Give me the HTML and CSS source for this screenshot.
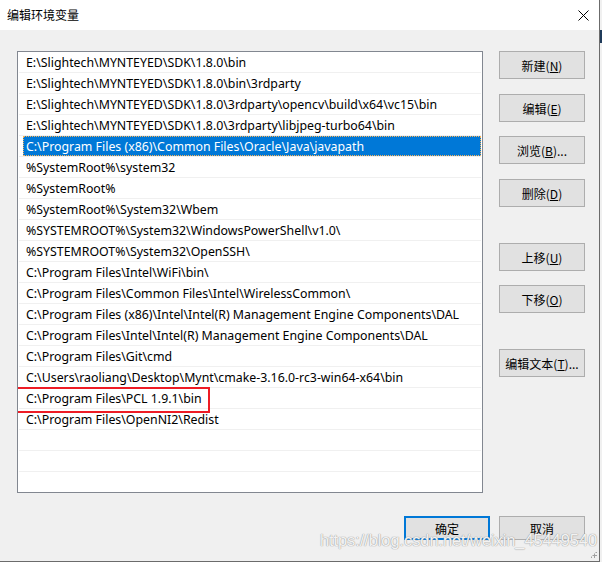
FILE: index.html
```html
<!DOCTYPE html>
<html lang="zh-CN">
<head>
    <meta charset="UTF-8">
    <meta name="viewport" content="width=device-width, initial-scale=1.0">
    <title>编辑环境变量</title>
    <link rel="stylesheet" href="styles.css">
</head>
<body>
    <div class="window">
        <div class="titlebar">
            <span class="title">编辑环境变量</span>
            <span class="close">
                <svg width="11" height="11" viewBox="0 0 11 11"><path d="M0.5 0.5 L10.5 10.5 M10.5 0.5 L0.5 10.5" stroke="#000" stroke-width="1" fill="none"/></svg>
            </span>
        </div>
        <div class="content">
            <div class="main">
                <div class="path-list">
                    <div class="row">E:\Slightech\MYNTEYED\SDK\1.8.0\bin</div>
                    <div class="row">E:\Slightech\MYNTEYED\SDK\1.8.0\bin\3rdparty</div>
                    <div class="row">E:\Slightech\MYNTEYED\SDK\1.8.0\3rdparty\opencv\build\x64\vc15\bin</div>
                    <div class="row">E:\Slightech\MYNTEYED\SDK\1.8.0\3rdparty\libjpeg-turbo64\bin</div>
                    <div class="row selected"><span class="sel">C:\Program Files (x86)\Common Files\Oracle\Java\javapath</span></div>
                    <div class="row">%SystemRoot%\system32</div>
                    <div class="row">%SystemRoot%</div>
                    <div class="row">%SystemRoot%\System32\Wbem</div>
                    <div class="row">%SYSTEMROOT%\System32\WindowsPowerShell\v1.0\</div>
                    <div class="row">%SYSTEMROOT%\System32\OpenSSH\</div>
                    <div class="row">C:\Program Files\Intel\WiFi\bin\</div>
                    <div class="row">C:\Program Files\Common Files\Intel\WirelessCommon\</div>
                    <div class="row">C:\Program Files (x86)\Intel\Intel(R) Management Engine Components\DAL</div>
                    <div class="row">C:\Program Files\Intel\Intel(R) Management Engine Components\DAL</div>
                    <div class="row">C:\Program Files\Git\cmd</div>
                    <div class="row">C:\Users\raoliang\Desktop\Mynt\cmake-3.16.0-rc3-win64-x64\bin</div>
                    <div class="row">C:\Program Files\PCL 1.9.1\bin</div>
                    <div class="row">C:\Program Files\OpenNI2\Redist</div>
                    <div class="row"></div>
                    <div class="row"></div>
                    <div class="row"></div>
                    <div class="mark"></div>
                </div>
                <div class="side">
                    <button class="btn">新建(<u>N</u>)</button>
                    <button class="btn">编辑(<u>E</u>)</button>
                    <button class="btn">浏览(<u>B</u>)...</button>
                    <button class="btn">删除(<u>D</u>)</button>
                    <button class="btn gap">上移(<u>U</u>)</button>
                    <button class="btn">下移(<u>O</u>)</button>
                    <button class="btn gap">编辑文本(<u>T</u>)...</button>
                </div>
            </div>
            <div class="footer">
                <button class="btn small default">确定</button>
                <button class="btn small">取消</button>
            </div>
        </div>
        <div class="watermark">https://blog.csdn.net/weixin_45449540</div>
        <div class="grip"></div>
    </div>
    <div class="behind"></div>
</body>
</html>
```

FILE: styles.css
```css
body {
    margin: 0;
    width: 602px;
    height: 562px;
    overflow: hidden;
    background: #f0f0f0;
    font-family: "Noto Sans", "Noto Sans CJK SC", sans-serif;
    font-size: 12px;
    color: #000;
    position: relative;
}
.window {
    width: 599px;
    height: 561px;
    border-right: 1px solid #6b6b6b;
    border-bottom: 1px solid #6b6b6b;
    background: #f0f0f0;
    position: relative;
    box-sizing: content-box;
}
.titlebar {
    height: 30px;
    background: #fff;
    display: flex;
    align-items: center;
    justify-content: space-between;
}
.title {
    padding-left: 7px;
    font-family: "Noto Sans CJK SC", sans-serif;
    font-size: 12px;
    margin-top: -1px;
}
.close {
    width: 46px;
    height: 30px;
    display: flex;
    align-items: center;
    justify-content: center;
    margin-right: -7px;
}
.close svg {
    display: block;
}
.content {
    padding: 21px 0 0 17px;
}
.main {
    display: flex;
    gap: 16px;
}
.path-list {
    width: 464px;
    height: 440px;
    border: 1px solid #828790;
    background: #fff;
    overflow: hidden;
    position: relative;
    font-size: 12.35px;
}
.row {
    height: 20px;
    line-height: 22px;
    border-bottom: 1px solid #f0f0f0;
    margin: 0 1px;
    padding-left: 7px;
    white-space: nowrap;
}
.row.selected {
    padding-left: 4px;
}
.sel {
    display: block;
    height: 20px;
    background: #0078d7;
    color: #fff;
    padding-left: 3px;
    outline: 1px dotted #f7b35a;
    outline-offset: -1px;
}
.mark {
    position: absolute;
    left: -2px;
    top: 335px;
    width: 190px;
    height: 22px;
    border: 2px solid #ee1c25;
}
.side {
    display: flex;
    flex-direction: column;
    width: 86px;
}
.btn {
    height: 28px;
    width: 86px;
    margin-bottom: 15px;
    background: #e1e1e1;
    border: 1px solid #adadad;
    font-family: "Noto Sans CJK SC", sans-serif;
    font-size: 12px;
    color: #000;
    padding: 0;
}
.side .btn:nth-child(2) {
    margin-bottom: 14px;
}
.side .btn:nth-child(5) {
    margin-bottom: 14px;
}
.btn.gap {
    margin-top: 21px;
}
.footer {
    display: flex;
    justify-content: flex-end;
    gap: 9px;
    padding-right: 14px;
    margin-top: 23px;
}
.btn.small {
    height: 24px;
    margin: 0;
}
.btn.default {
    border: 2px solid #0078d7;
}
.watermark {
    position: absolute;
    left: 320px;
    top: 531px;
    font-family: "Liberation Sans", Arial, sans-serif;
    font-size: 16.5px;
    color: rgba(255, 255, 255, 0.9);
    text-shadow: 0 0 1px #9a9a9a, 0 0 1px #9a9a9a;
    letter-spacing: -0.1px;
}
.grip {
    position: absolute;
    right: 2px;
    bottom: 3px;
    width: 7px;
    height: 7px;
    background-image: radial-gradient(circle, #a0a0a0 1px, transparent 1.2px);
    background-size: 3px 3px;
    clip-path: polygon(100% 0, 100% 100%, 0 100%);
}
.behind {
    position: absolute;
    left: 600px;
    top: 30px;
    width: 2px;
    height: 13px;
    background: #1f3b5a;
}
```
